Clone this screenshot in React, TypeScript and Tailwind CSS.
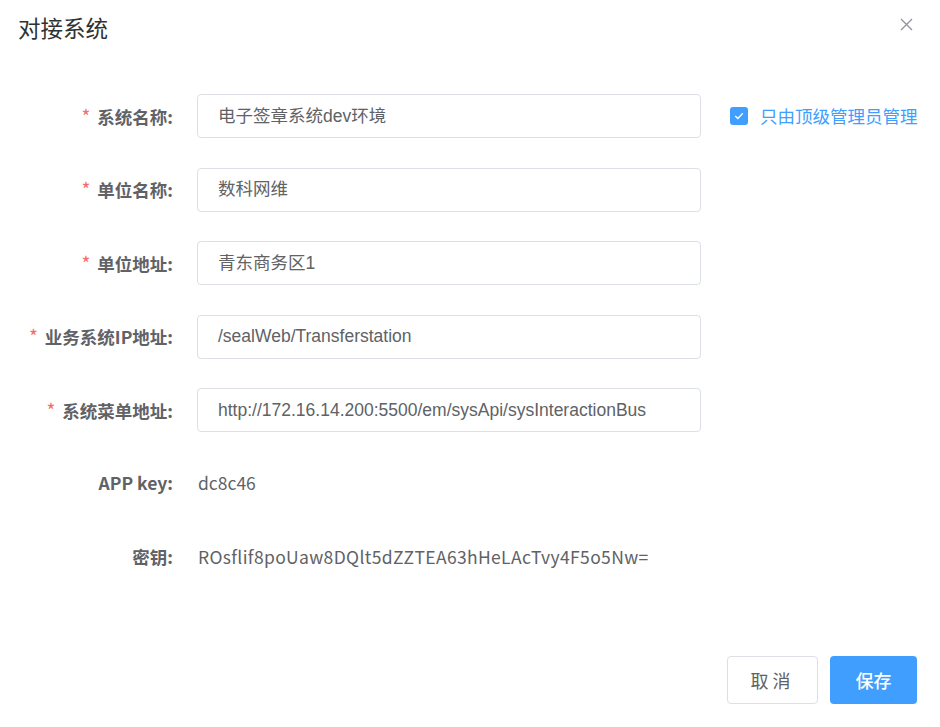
import React from "react";

const cjk = '"Noto Sans CJK SC", "Noto Sans", sans-serif';
const inputFont = '"Liberation Sans", "Noto Sans CJK SC", sans-serif';

function Row({ label, required, children }: { label: string; required?: boolean; children: React.ReactNode }) {
  return (
    <div className="flex h-[44px] items-center">
      <div className="w-[173px] shrink-0 text-right text-[17.5px] font-bold text-[#606266]" style={{ fontFamily: cjk }}>
        {required && <span className="mr-[7px] text-[19px] text-[#f56c6c] font-normal">*</span>}
        {label}
      </div>
      <div className="ml-[24px] flex items-center">{children}</div>
    </div>
  );
}

function Input({ value }: { value: string }) {
  return (
    <div
      className="flex h-[44px] w-[504px] items-center rounded-[4px] border border-[#dcdfe6] bg-white px-[20px] text-[17.5px] text-[#606266]"
      style={{ fontFamily: inputFont }}
    >
      {value}
    </div>
  );
}

export default function App() {
  return (
    <div className="relative h-[727px] w-[940px] bg-white">
      <div className="flex items-center justify-between pl-[18px] pr-[27px] pt-[13px]">
        <div className="text-[22.5px] leading-[28px] text-[#303133]" style={{ fontFamily: cjk }}>
          对接系统
        </div>
        <svg width="13" height="13" viewBox="0 0 13 13" className="mt-[-6px]">
          <path d="M1 1 L12 12 M12 1 L1 12" stroke="#909399" strokeWidth="1.3" fill="none" />
        </svg>
      </div>
      <div className="mt-[53px] flex flex-col gap-[29.5px]">
        <Row label="系统名称:" required>
          <Input value="电子签章系统dev环境" />
          <div className="ml-[29px] flex items-center">
            <span className="flex h-[18px] w-[18px] items-center justify-center rounded-[3px] bg-[#409eff]">
              <svg width="10" height="8" viewBox="0 0 10 8">
                <path d="M1.2 4 L3.9 6.5 L8.8 1.3" stroke="#fff" strokeWidth="1.4" fill="none" />
              </svg>
            </span>
            <span className="ml-[12px] text-[17.5px] text-[#409eff]" style={{ fontFamily: cjk }}>
              只由顶级管理员管理
            </span>
          </div>
        </Row>
        <Row label="单位名称:" required>
          <Input value="数科网维" />
        </Row>
        <Row label="单位地址:" required>
          <Input value="青东商务区1" />
        </Row>
        <Row label="业务系统IP地址:" required>
          <Input value="/sealWeb/Transferstation" />
        </Row>
        <Row label="系统菜单地址:" required>
          <Input value="http://172.16.14.200:5500/em/sysApi/sysInteractionBus" />
        </Row>
        <Row label="APP key:">
          <span className="ml-[1px] text-[17.5px] text-[#606266]" style={{ fontFamily: cjk }}>dc8c46</span>
        </Row>
        <Row label="密钥:">
          <span className="ml-[1px] text-[17.5px] tracking-[0.35px] text-[#606266]" style={{ fontFamily: cjk }}>
            ROsflif8poUaw8DQlt5dZZTEA63hHeLAcTvy4F5o5Nw=
          </span>
        </Row>
      </div>
      <div className="mt-[77px] flex justify-end gap-[12px] pr-[23px]" style={{ fontFamily: cjk }}>
        <button className="h-[48px] w-[91px] rounded-[4px] border border-[#dcdfe6] bg-white text-[18px] tracking-[4px] text-[#606266]">
          取消
        </button>
        <button className="h-[48px] w-[87px] rounded-[4px] bg-[#409eff] text-[18px] font-medium text-white">
          保存
        </button>
      </div>
    </div>
  );
}
